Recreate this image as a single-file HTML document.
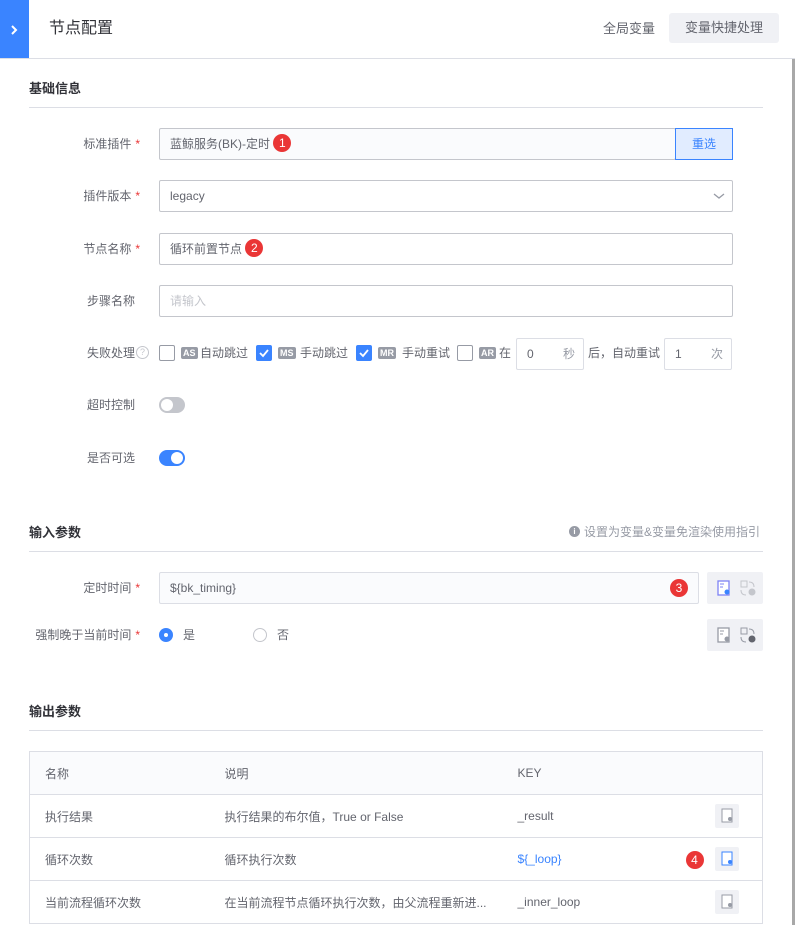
<!DOCTYPE html>
<html><head><meta charset="utf-8">
<style>
*{margin:0;padding:0;box-sizing:border-box}
body{width:795px;height:942px;background:#fff;position:relative;overflow:hidden;font-family:"Liberation Sans","Noto Sans CJK SC",sans-serif;font-size:12px;color:#63656e}
.a{position:absolute}
.lbl{position:absolute;text-align:right;width:140px;left:0;font-size:12px;color:#63656e;line-height:16px}
.star{color:#ea3636;margin-left:4px}
.inp{position:absolute;border:1px solid #c4c6cc;border-radius:2px;height:32px;line-height:30px;padding-left:10px;font-size:12px;color:#63656e;background:#fff}
.dis{background:#fafbfd;border-color:#dcdee5}
.badge{display:inline-block;width:18px;height:18px;border-radius:9px;background:#ea3636;color:#fff;text-align:center;line-height:18px;font-size:12px;vertical-align:middle}
.h2{position:absolute;left:29px;font-weight:bold;font-size:13px;color:#313238}
.line{position:absolute;left:29px;width:734px;height:1px;background:#dcdee5}
.cb{position:absolute;width:16px;height:16px;border:1px solid #979ba5;border-radius:2px;background:#fff}
.cb.on{background:#3a84ff;border-color:#3a84ff}
.tag{position:absolute;height:12px;line-height:12px;font-size:9px;font-weight:bold;color:#fff;background:#979ba5;border-radius:2px;padding:0 2px}
.ibox{position:absolute;background:#f0f1f5;border-radius:2px}
td{height:43px;border-bottom:1px solid #dcdee5;font-size:12px;color:#63656e;padding:0}
</style></head><body>
<!-- header -->
<div class="a" style="left:0;top:0;width:29px;height:58px;background:#3a84ff"></div>
<svg class="a" style="left:9px;top:24px" width="10" height="12" viewBox="0 0 10 12"><path d="M3 2 L7 6 L3 10" stroke="#fff" stroke-width="2" fill="none"/></svg>
<div class="a" style="left:49px;top:18px;font-size:16px;color:#313238;line-height:22px">节点配置</div>
<div class="a" style="left:603px;top:20px;font-size:13px;color:#63656e;line-height:18px">全局变量</div>
<div class="a" style="left:669px;top:13px;width:110px;height:30px;background:#f0f1f5;border-radius:3px;text-align:center;line-height:30px;font-size:13px;color:#63656e">变量快捷处理</div>
<div class="a" style="left:0;top:58px;width:795px;height:1px;background:#dcdee5"></div>
<div class="a" style="left:792px;top:59px;width:3px;height:866px;background:#a8a8a8"></div>

<div class="h2" style="top:78px">基础信息</div>
<div class="line" style="top:107px"></div>

<div class="lbl" style="top:136px">标准插件<span class="star">*</span></div>
<div class="inp dis" style="left:159px;top:128px;width:517px;border-color:#c4c6cc">蓝鲸服务(BK)-定时 <span class="badge" style="margin-top:-3px">1</span></div>
<div class="a" style="left:675px;top:128px;width:58px;height:32px;background:#e1ecff;border:1px solid #3a84ff;color:#3a84ff;text-align:center;line-height:30px">重选</div>

<div class="lbl" style="top:188px">插件版本<span class="star">*</span></div>
<div class="inp" style="left:159px;top:180px;width:574px">legacy</div>
<svg class="a" style="left:713px;top:191px" width="12" height="10"><path d="M1 3 L6 7 L11 3" stroke="#979ba5" stroke-width="1.3" fill="none"/></svg>

<div class="lbl" style="top:241px">节点名称<span class="star">*</span></div>
<div class="inp" style="left:159px;top:233px;width:574px">循环前置节点 <span class="badge" style="margin-top:-3px">2</span></div>

<div class="lbl" style="top:293px;width:135px">步骤名称</div>
<div class="inp" style="left:159px;top:285px;width:574px;color:#c4c6cc">请输入</div>

<div class="a" style="left:87px;top:345px;line-height:16px">失败处理</div>
<div class="a" style="left:136px;top:346px;width:13px;height:13px;border:1px solid #c4c6cc;border-radius:50%;font-size:9px;text-align:center;line-height:11px;color:#c4c6cc">?</div>
<div class="cb" style="left:159px;top:345px"></div>
<div class="tag" style="left:181px;top:347px">AS</div>
<div class="a" style="left:200px;top:345px;line-height:16px">自动跳过</div>
<div class="cb on" style="left:256px;top:345px"><svg width="14" height="14"><path d="M3 7 L6 10 L11 4" stroke="#fff" stroke-width="1.8" fill="none"/></svg></div>
<div class="tag" style="left:278px;top:347px">MS</div>
<div class="a" style="left:300px;top:345px;line-height:16px">手动跳过</div>
<div class="cb on" style="left:356px;top:345px"><svg width="14" height="14"><path d="M3 7 L6 10 L11 4" stroke="#fff" stroke-width="1.8" fill="none"/></svg></div>
<div class="tag" style="left:378px;top:347px">MR</div>
<div class="a" style="left:402px;top:345px;line-height:16px">手动重试</div>
<div class="cb" style="left:457px;top:345px"></div>
<div class="tag" style="left:479px;top:347px">AR</div>
<div class="a" style="left:499px;top:345px;line-height:16px">在</div>
<div class="inp" style="left:516px;top:338px;width:68px;border-color:#dcdee5">0<span style="position:absolute;right:8px;color:#979ba5">秒</span></div>
<div class="a" style="left:588px;top:345px;line-height:16px">后，自动重试</div>
<div class="inp" style="left:664px;top:338px;width:68px;border-color:#dcdee5">1<span style="position:absolute;right:8px;color:#979ba5">次</span></div>

<div class="a" style="left:87px;top:397px;line-height:16px">超时控制</div>
<div class="a" style="left:159px;top:397px;width:26px;height:16px;border-radius:8px;background:#c4c6cc"><div style="position:absolute;left:2px;top:2px;width:12px;height:12px;border-radius:6px;background:#fff"></div></div>
<div class="a" style="left:87px;top:450px;line-height:16px">是否可选</div>
<div class="a" style="left:159px;top:450px;width:26px;height:16px;border-radius:8px;background:#3a84ff"><div style="position:absolute;left:12px;top:2px;width:12px;height:12px;border-radius:6px;background:#fff"></div></div>

<div class="h2" style="top:522px">输入参数</div>
<div class="a" style="left:569px;top:526px;width:11px;height:11px;border-radius:50%;background:#979ba5;color:#fff;font-size:8px;text-align:center;line-height:11px;font-weight:bold">i</div>
<div class="a" style="left:584px;top:524px;font-size:12px;color:#979ba5;line-height:16px">设置为变量&amp;变量免渲染使用指引</div>
<div class="line" style="top:551px"></div>

<div class="lbl" style="top:580px">定时时间<span class="star">*</span></div>
<div class="inp dis" style="left:159px;top:572px;width:540px">${bk_timing}<span class="badge" style="position:absolute;right:10px;top:6px">3</span></div>
<div class="ibox" style="left:707px;top:572px;width:56px;height:32px"></div>
<svg class="a" style="left:717px;top:580px" width="14" height="16"><rect x="1" y="1" width="11" height="14" fill="#fff" stroke="#7e83f5" stroke-width="1.3"/><path d="M3 4h4M3 7h3" stroke="#7e83f5"/><circle cx="10" cy="12" r="2.5" fill="#3a84ff"/></svg>
<svg class="a" style="left:740px;top:580px" width="16" height="16"><rect x="1" y="1" width="6" height="6" fill="none" stroke="#c4c6cc"/><path d="M9 2 q5 0 5 5 M1 10 q0 5 5 5" stroke="#c4c6cc" fill="none"/><circle cx="12" cy="12" r="3.5" fill="#c4c6cc"/></svg>

<div class="lbl" style="top:627px">强制晚于当前时间<span class="star">*</span></div>
<div class="a" style="left:159px;top:628px;width:14px;height:14px;border-radius:50%;background:#3a84ff"><div style="position:absolute;left:5px;top:5px;width:4px;height:4px;border-radius:2px;background:#fff"></div></div>
<div class="a" style="left:183px;top:627px;line-height:16px">是</div>
<div class="a" style="left:253px;top:628px;width:14px;height:14px;border-radius:50%;border:1px solid #c4c6cc"></div>
<div class="a" style="left:277px;top:627px;line-height:16px">否</div>
<div class="ibox" style="left:707px;top:619px;width:56px;height:32px"></div>
<svg class="a" style="left:717px;top:627px" width="14" height="16"><rect x="1" y="1" width="11" height="14" fill="#fff" stroke="#979ba5" stroke-width="1.3"/><path d="M3 4h4M3 7h3" stroke="#979ba5"/><circle cx="10" cy="12" r="2.5" fill="#979ba5"/></svg>
<svg class="a" style="left:740px;top:627px" width="16" height="16"><rect x="1" y="1" width="6" height="6" fill="none" stroke="#979ba5"/><path d="M9 2 q5 0 5 5 M1 10 q0 5 5 5" stroke="#979ba5" fill="none"/><circle cx="12" cy="12" r="3.5" fill="#63656e"/></svg>

<div class="h2" style="top:701px">输出参数</div>
<div class="line" style="top:730px"></div>

<table class="a" style="left:29px;top:751px;width:734px;border-collapse:collapse;border:1px solid #dcdee5">
<tr style="background:#fafbfd"><td style="padding-left:15px;width:195px">名称</td><td style="width:293px">说明</td><td>KEY</td><td style="width:60px"></td></tr>
<tr><td style="padding-left:15px">执行结果</td><td>执行结果的布尔值，True or False</td><td>_result</td><td><div style="margin-left:12px;width:24px;height:24px;background:#f0f1f5;border-radius:2px;padding:4px 6px"><svg width="12" height="16"><rect x="1" y="1" width="10" height="13" fill="#fff" stroke="#979ba5"/><circle cx="9" cy="11" r="2" fill="#979ba5"/></svg></div></td></tr>
<tr><td style="padding-left:15px">循环次数</td><td>循环执行次数</td><td style="color:#3a84ff">${_loop}</td><td style="position:relative"><span class="badge" style="position:absolute;left:-17px;top:13px">4</span><div style="margin-left:12px;width:24px;height:24px;background:#f0f1f5;border-radius:2px;padding:4px 6px"><svg width="12" height="16"><rect x="1" y="1" width="10" height="13" fill="#fff" stroke="#3a84ff"/><circle cx="9" cy="11" r="2" fill="#3a84ff"/></svg></div></td></tr>
<tr><td style="padding-left:15px">当前流程循环次数</td><td>在当前流程节点循环执行次数，由父流程重新进...</td><td>_inner_loop</td><td><div style="margin-left:12px;width:24px;height:24px;background:#f0f1f5;border-radius:2px;padding:4px 6px"><svg width="12" height="16"><rect x="1" y="1" width="10" height="13" fill="#fff" stroke="#979ba5"/><circle cx="9" cy="11" r="2" fill="#979ba5"/></svg></div></td></tr>
</table>
</body></html>
